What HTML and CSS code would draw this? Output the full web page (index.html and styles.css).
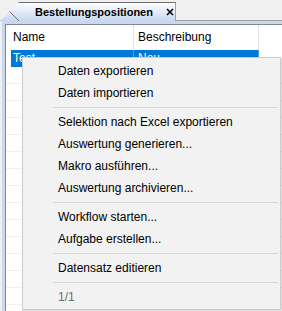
FILE: index.html
```html
<!DOCTYPE html>
<html lang="de">
<head>
    <meta charset="UTF-8">
    <meta name="viewport" content="width=device-width, initial-scale=1.0">
    <title>Bestellungspositionen</title>
    <link rel="stylesheet" href="styles.css">
</head>
<body>
    <div class="window">
        <div class="tabstrip">
            <div class="tab">
                <span class="tab-title">Bestellungspositionen</span>
                <svg class="tab-close" width="8" height="8" viewBox="0 0 8 8">
                    <path d="M1 1L7 7M7 1L1 7" stroke="#000" stroke-width="1.6" fill="none"/>
                </svg>
            </div>
        </div>
        <div class="frame">
            <div class="grid">
                <div class="row head">
                    <div class="cell c1">Name</div>
                    <div class="cell c2">Beschreibung</div>
                </div>
                <div class="row selected">
                    <div class="cell c1">Test</div>
                    <div class="cell c2">Neu</div>
                </div>
                <div class="row"></div>
                <div class="row"></div>
                <div class="row"></div>
                <div class="row"></div>
                <div class="row"></div>
                <div class="row"></div>
                <div class="row"></div>
                <div class="row"></div>
                <div class="row"></div>
                <div class="row"></div>
                <div class="row"></div>
                <div class="row"></div>
                <div class="row"></div>
                <div class="row"></div>
            </div>
        </div>

        <div class="menu">
            <div class="menu-item">Daten exportieren</div>
            <div class="menu-item">Daten importieren</div>
            <div class="menu-sep"></div>
            <div class="menu-item">Selektion nach Excel exportieren</div>
            <div class="menu-item">Auswertung generieren...</div>
            <div class="menu-item">Makro ausführen...</div>
            <div class="menu-item">Auswertung archivieren...</div>
            <div class="menu-sep"></div>
            <div class="menu-item">Workflow starten...</div>
            <div class="menu-item">Aufgabe erstellen...</div>
            <div class="menu-sep"></div>
            <div class="menu-item">Datensatz editieren</div>
            <div class="menu-sep"></div>
            <div class="menu-item disabled">1/1</div>
        </div>
    </div>
</body>
</html>
```

FILE: styles.css
```css
body {
    margin: 0;
    background: #f0f0f0;
    font-family: "Liberation Sans", Arial, sans-serif;
    font-size: 12px;
    color: #000;
}
.window {
    position: relative;
    height: 311px;
    display: flex;
    flex-direction: column;
    overflow: hidden;
}

/* tab strip */
.tabstrip {
    height: 21px;
    display: flex;
    align-items: flex-end;
    background: linear-gradient(#a0a0a0, #a0a0a0) left bottom / 100% 1px no-repeat;
}
.tab {
    width: 176px;
    height: 19px;
    display: flex;
    align-items: center;
    box-sizing: border-box;
    padding-left: 35px;
    clip-path: polygon(0 100%, 19px 0, 100% 0, 100% 100%);
    background:
        linear-gradient(to top right, transparent calc(50% - 0.7px), #6e6e6e calc(50% - 0.7px), #6e6e6e calc(50% + 0.7px), transparent calc(50% + 0.7px)) 0 0 / 19px 19px no-repeat,
        linear-gradient(#6e6e6e, #6e6e6e) 0 0 / 100% 1px no-repeat,
        linear-gradient(#a0a0a0, #a0a0a0) right top / 1px 100% no-repeat,
        linear-gradient(#ffffff, #c9d7f1);
}
.tab-title {
    font-weight: bold;
    font-size: 11px;
}
.tab-close {
    margin-left: 13px;
    margin-top: 1px;
}

/* list frame */
.frame {
    flex: 1;
    margin-left: 2px;
    padding: 3px 0 0 3px;
    background: #c9d7f1;
    display: flex;
}
.grid {
    flex: 1;
    background: #fff;
    border-top: 1px solid #828790;
    border-left: 1px solid #828790;
}
.row {
    height: 17px;
    box-sizing: border-box;
    border-bottom: 1px solid #f0f0f0;
    display: flex;
    padding-left: 5px;
}
.row.head {
    height: 25px;
    border-bottom: none;
    align-items: center;
}
.cell {
    box-sizing: border-box;
    border-right: 1px solid #e3e3e3;
    white-space: nowrap;
    overflow: hidden;
}
.c1 {
    width: 123px;
    padding-left: 2px;
}
.c2 {
    width: 125px;
    padding-left: 4px;
}
.row.head .cell {
    height: 25px;
    line-height: 25px;
}
.row.selected {
    border-bottom: none;
}
.row.selected .cell {
    background: #0078d7;
    color: #fff;
    line-height: 17px;
    border-right-color: #4d9fe0;
}

/* context menu */
.menu {
    position: absolute;
    left: 22px;
    top: 57px;
    width: 259px;
    box-sizing: border-box;
    background: #f2f2f2;
    border: 1px solid #cccccc;
    padding: 2px 0 1px;
    box-shadow: 1px 1px 2px rgba(0, 0, 0, 0.2);
}
.menu-item {
    height: 22px;
    line-height: 22px;
    padding-left: 35px;
    white-space: nowrap;
}
.menu-item.disabled {
    color: #6d6d6d;
}
.menu-sep {
    height: 7px;
    margin: 0 2px 0 30px;
    background: linear-gradient(#d7d7d7, #d7d7d7) left 3px / 100% 1px no-repeat;
}
```
